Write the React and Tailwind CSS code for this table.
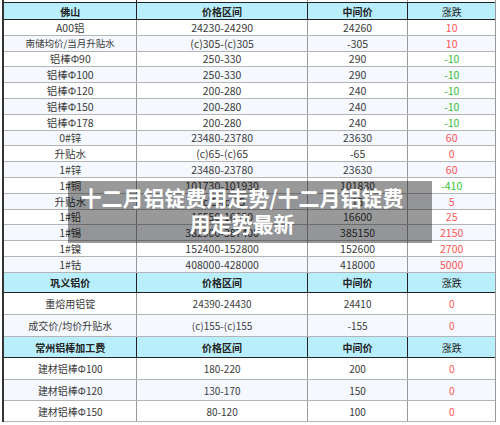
import React from 'react';

const RED = 'text-[#ff5555]';
const GREEN = 'text-[#33c433]';

const section1 = [
  ['A00铝', '24230-24290', '24260', '10', 16],
  ['南储均价/当月升贴水', '(c)305-(c)305', '-305', '10', 16, true],
  ['铝棒Φ90', '250-330', '290', '-10', 15],
  ['铝棒Φ100', '250-330', '290', '-10', 16],
  ['铝棒Φ120', '200-280', '240', '-10', 16],
  ['铝棒Φ150', '200-280', '240', '-10', 16],
  ['铝棒Φ178', '200-280', '240', '-10', 16],
  ['0#锌', '23480-23780', '23630', '60', 15],
  ['升贴水', '(c)65-(c)65', '-65', '0', 16],
  ['1#锌', '23480-23780', '23630', '60', 16],
  ['1#铜', '101730-101930', '101830', '-410', 16],
  ['升贴水', '(c)5-(c)25', '15', '5', 16],
  ['1#铅', '16550-16650', '16600', '25', 15],
  ['1#锡', '382900-387400', '385150', '2150', 16],
  ['1#镍', '152400-152800', '152600', '2700', 16],
  ['1#钴', '408000-428000', '418000', '5000', 16],
];

const section2 = [
  ['重熔用铝锭', '24390-24430', '24410', '0', 22],
  ['成交价/均价升贴水', '(c)155-(c)155', '-155', '0', 22],
];

const section3 = [
  ['建材铝棒Φ100', '180-220', '200', '0', 22],
  ['建材铝棒Φ120', '130-170', '150', '0', 21],
  ['建材铝棒Φ150', '80-120', '100', '0', 21],
];

function Header({ title, h }) {
  return (
    <div className="flex bg-[#b9eefc] border-b border-[#222] text-[10px] font-bold text-[#222]" style={{ height: h }}>
      <div className="w-[134px] border-r border-[#222] flex items-center justify-center">{title}</div>
      <div className="w-[171px] border-r border-[#222] flex items-center justify-center">价格区间</div>
      <div className="w-[101px] border-r border-[#222] flex items-center justify-center">中间价</div>
      <div className="w-[87px] flex items-center justify-center font-normal">涨跌</div>
    </div>
  );
}

function Row({ r, i, small }) {
  const [name, range, mid, chg, h, tiny] = r;
  const up = !chg.startsWith('-');
  return (
    <div
      className={`flex border-b border-[#b4b4b4] text-[#3a3a3a] ${small ? 'text-[10px]' : 'text-[10.5px]'} ${i % 2 ? 'bg-[#f5f8fe]' : 'bg-white'}`}
      style={{ height: h }}
    >
      <div className={`w-[134px] border-r border-[#999] flex items-center justify-center ${tiny ? 'text-[9.5px]' : ''}`}>{name}</div>
      <div className="w-[171px] border-r border-[#999] flex items-center justify-center">{range}</div>
      <div className="w-[101px] border-r border-[#999] flex items-center justify-center">{mid}</div>
      <div className={`w-[87px] flex items-center justify-center ${up ? RED : GREEN}`}>{chg}</div>
    </div>
  );
}

export default function App() {
  return (
    <div className="relative w-[500px] h-[425px] overflow-hidden bg-white" style={{ fontFamily: '"Noto Sans CJK SC", "Noto Sans", sans-serif' }}>
      <div className="ml-[2px] w-[494px] border-l-2 border-l-[#333] border-r border-r-[#999]">
        <div className="flex h-[3px] border-b border-[#222] bg-white">
          <div className="w-[134px] border-r border-[#222]" />
          <div className="w-[171px] border-r border-[#999]" />
          <div className="w-[101px] border-r border-[#999]" />
          <div className="w-[87px]" />
        </div>
        <Header title="佛山" h={17} />
        {section1.map((r, i) => <Row key={i} r={r} i={i} />)}
        <Header title="巩义铝价" h={20} />
        {section2.map((r, i) => <Row key={i} r={r} i={i} small />)}
        <Header title="常州铝棒加工费" h={21} />
        {section3.map((r, i) => <Row key={i} r={r} i={i} small />)}
      </div>

      <div className="absolute left-[68px] top-[181px] w-[364px] h-[62px] bg-black/40">
        <div className="pl-[8px] pr-[24px] pt-[3px] flex flex-col items-center text-white font-bold text-[21px] leading-[26px] whitespace-nowrap">
          <span>十二月铝锭费用走势/十二月铝锭费</span>
          <span>用走势最新</span>
        </div>
      </div>
    </div>
  );
}
